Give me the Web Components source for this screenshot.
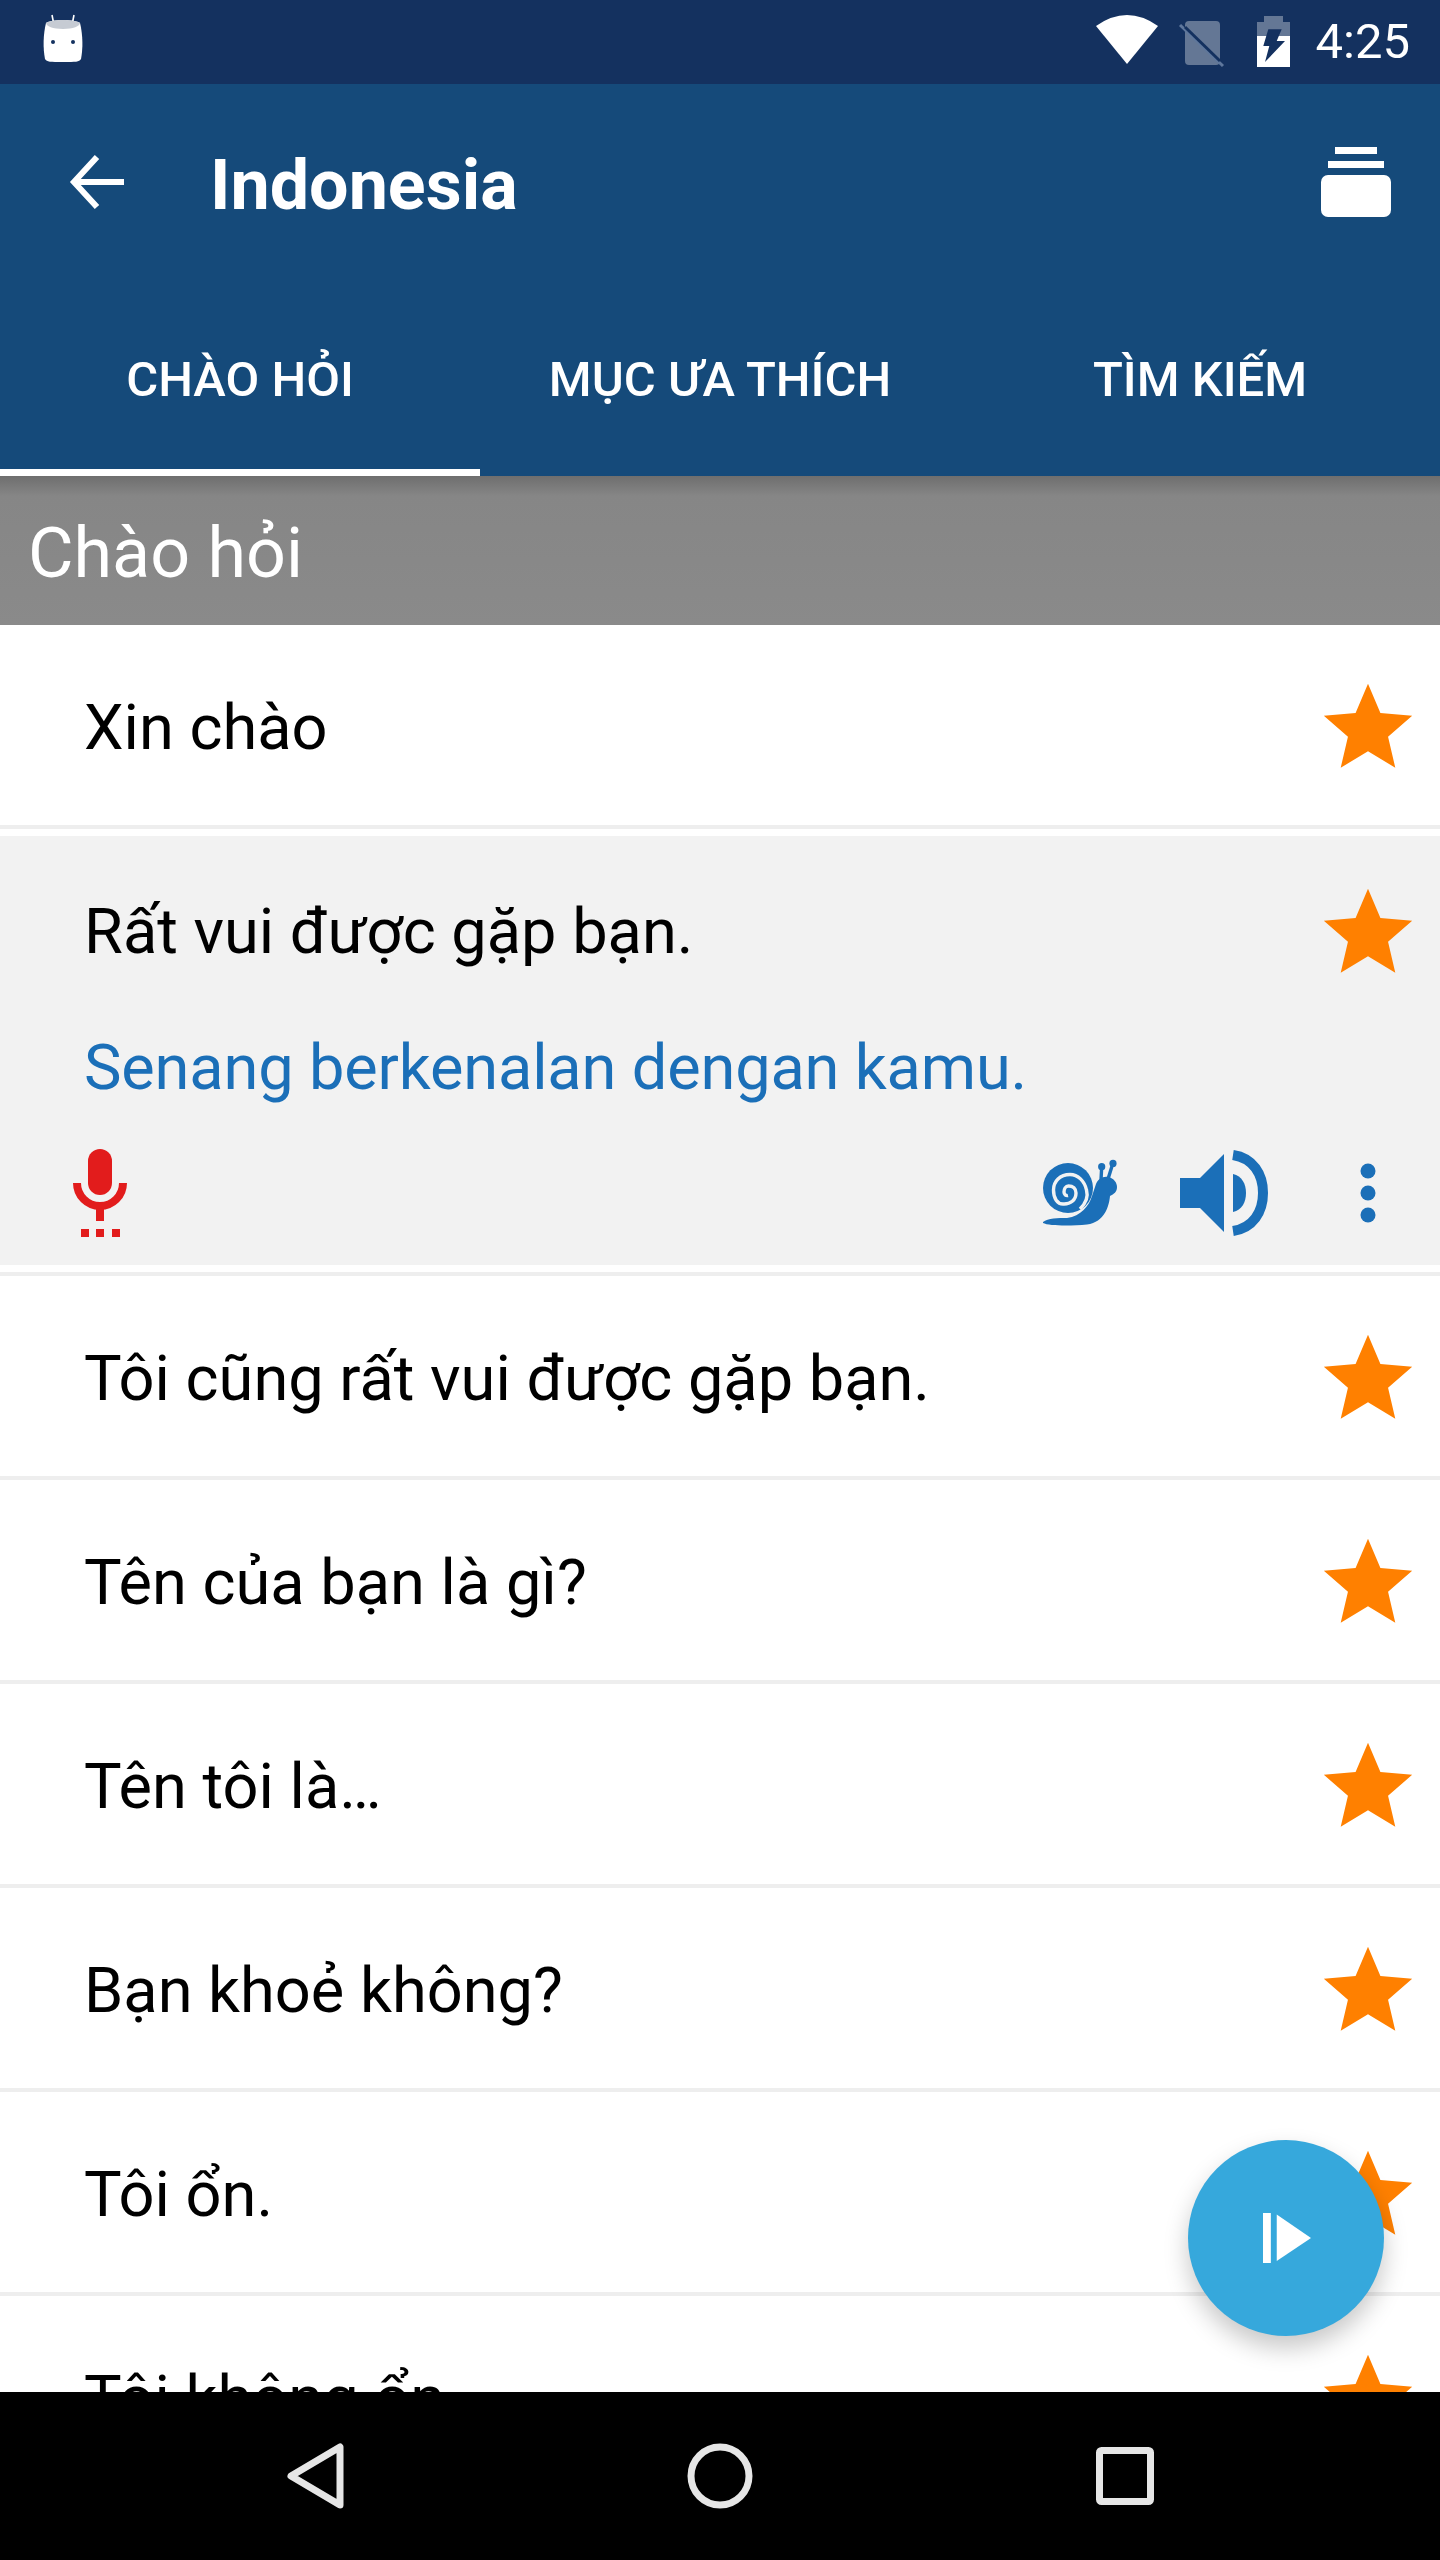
<!DOCTYPE html>
<html lang="vi">
<head>
<meta charset="utf-8">
<title>Indonesia</title>
<style>
  html, body { margin: 0; padding: 0; background: #fff; }
  body { font-family: Roboto, "Noto Sans", sans-serif; }
</style>
</head>
<body>
<app-screen>
  <status-bar slot="top"></status-bar>
  <app-header slot="top" title="Indonesia">
    <tab-item active>CHÀO HỎI</tab-item>
    <tab-item>MỤC ƯA THÍCH</tab-item>
    <tab-item>TÌM KIẾM</tab-item>
  </app-header>
  <section-head>Chào hỏi</section-head>
  <phrase-row>Xin chào</phrase-row>
  <phrase-row expanded>
    Rất vui được gặp bạn.
    <span slot="translation">Senang berkenalan dengan kamu.</span>
  </phrase-row>
  <phrase-row>Tôi cũng rất vui được gặp bạn.</phrase-row>
  <phrase-row>Tên của bạn là gì?</phrase-row>
  <phrase-row>Tên tôi là…</phrase-row>
  <phrase-row>Bạn khoẻ không?</phrase-row>
  <phrase-row>Tôi ổn.</phrase-row>
  <phrase-row>Tôi không ổn.</phrase-row>
  <fab-button slot="overlay"></fab-button>
  <nav-bar slot="bottom"></nav-bar>
</app-screen>

<script>
// all icons live here, keyed by name: [viewBox, markup]
const ICONS = {
  android: ["0 0 40 48", `
    <path d="M9 0l2 10M31 0l-2 10" stroke="#fff" stroke-width="1.6" fill="none"/>
    <path d="M3 8C8 4 32 4 37 8C40 20 40 34 38 44C36 47 33 47 20 47C7 47 4 47 2 44C0 34 0 20 3 8Z" fill="#fff"/>
    <path d="M3 8C8 4 32 4 37 8C37 11 30 14 20 14C10 14 3 11 3 8Z" fill="#c6cbd3"/>
    <circle cx="10" cy="27" r="2" fill="#14315f"/><circle cx="30" cy="27" r="2" fill="#14315f"/>`],
  wifi: ["0 0 62 49", `<path d="M0 11Q31 -11 62 11L31 49Z" fill="#fff"/>`],
  sim: ["0 0 45 48", `
    <path d="M6 5a4 4 0 0 1 4-4h27a4 4 0 0 1 4 4v36a4 4 0 0 1-4 4H10a4 4 0 0 1-4-4Z" fill="#fff" opacity=".34"/>
    <path d="M1 5L44 46" stroke="#5f779c" stroke-width="3"/>
    <path d="M6 7L41 41" stroke="#14315f" stroke-width="3"/>`],
  battery: ["0 0 33 51", `
    <path d="M7 0h19v6h7v14H0V6h7Z" fill="#fff" opacity=".34"/>
    <path d="M0 20h33v31H0Z" fill="#fff"/>
    <path d="M11.3 13.3H24.7L19.7 25H28L8 46L12.3 30H6.3Z" fill="#14315f"/>`],
  back: ["0 0 56 56", `<path d="M54 28H5M27 3L4 28l23 25" stroke="#fff" stroke-width="6" fill="none"/>`],
  layers: ["0 0 70 70", `
    <rect x="14" y="0" width="42" height="7" fill="#fff"/>
    <rect x="7" y="14" width="56" height="7" fill="#fff"/>
    <rect x="0" y="28" width="70" height="42" rx="7" fill="#fff"/>`],
  star: ["0 0 24 24", `<path d="M12 17.27L18.18 21l-1.64-7.03L22 9.24l-7.19-.61L12 2 9.19 8.63 2 9.24l5.46 4.73L5.82 21z" fill="#ff8000"/>`],
  mic: ["0 0 54 88", `
    <rect x="15" y="0" width="24" height="46" rx="12" fill="#e21c1c"/>
    <path d="M4 34a23 23 0 0 0 46 0" stroke="#e21c1c" stroke-width="8" fill="none"/>
    <rect x="23" y="56" width="8" height="16" fill="#e21c1c"/>
    <rect x="8" y="80" width="8" height="8" fill="#e21c1c"/>
    <rect x="23" y="80" width="8" height="8" fill="#e21c1c"/>
    <rect x="39" y="80" width="8" height="8" fill="#e21c1c"/>`],
  snail: ["0 0 74 66", `
    <path d="M0 62C5 58 15 58 24 58C38 56 46 46 49 36L53 24C55 19 60 16 65 17C71 18 74 23 74 27C74 32 71 34 67 36C66 46 62 62 44 64.5C28 66 6 66 0 63Z" fill="#1b6fb8"/>
    <circle cx="25" cy="28" r="25" fill="#1b6fb8"/>
    <path d="M37 49C43 43 45.5 37 43.5 30C41.5 21 35 14.5 27 14.5C17 14.5 10.5 21.5 10.5 30C10.5 38.500 14.5 44 20 44C27.5 44.5 33 40 33 33C33 28.5 30 26 25.5 26C22.5 26 21 29 21 32C21 34.5 23 36 25 35.5" stroke="#f2f2f2" stroke-width="3.4" fill="none"/>
    <path d="M58 20L58.7 7M65 19L70 3" stroke="#1b6fb8" stroke-width="3.4" fill="none"/>
    <circle cx="58.7" cy="6.7" r="3.6" fill="#1b6fb8"/><circle cx="70" cy="3.4" r="3.6" fill="#1b6fb8"/>`],
  speaker: ["0 0 88 86", `
    <path d="M0 28H20L44 4V82L20 58H0Z" fill="#1b6fb8"/>
    <path d="M53 24C62 26 66 34 66 43C66 52 62 60 53 62Z" fill="#1b6fb8"/>
    <path d="M53 5C73 8 83 24 83 43C83 62 73 78 53 81" stroke="#1b6fb8" stroke-width="10" fill="none"/>`],
  dots: ["0 0 16 60", `
    <circle cx="8" cy="8" r="7.5" fill="#1b6fb8"/><circle cx="8" cy="30" r="7.5" fill="#1b6fb8"/><circle cx="8" cy="52" r="7.5" fill="#1b6fb8"/>`],
  play: ["0 0 50 50", `
    <rect x="0" y="0" width="8" height="50" fill="#fff"/>
    <path d="M14 1.5L49 25L14 48Z" fill="#fff"/>`],
  navback: ["0 0 58 66", `<path d="M54 4V62L5 33Z" stroke="#e6e6e6" stroke-width="7" stroke-linejoin="round" fill="none"/>`],
  navhome: ["0 0 66 66", `<circle cx="33" cy="33" r="29" stroke="#e6e6e6" stroke-width="7" fill="none"/>`],
  navrecent: ["0 0 58 58", `<rect x="3.5" y="3.5" width="51" height="51" rx="2" stroke="#e6e6e6" stroke-width="7" fill="none"/>`],
};

class AppIcon extends HTMLElement {
  connectedCallback() {
    const [box, body] = ICONS[this.getAttribute("name")];
    const w = this.getAttribute("w");
    const h = this.getAttribute("h") || w;
    this.attachShadow({mode: "open"}).innerHTML = `
      <style>
        :host { display: block; flex: none; width: ${w}px; height: ${h}px; }
        svg { display: block; width: 100%; height: 100%; overflow: visible; }
      </style>
      <svg viewBox="${box}" preserveAspectRatio="none">${body}</svg>`;
  }
}
customElements.define("app-icon", AppIcon);

class AppScreen extends HTMLElement {
  constructor() {
    super();
    this.attachShadow({mode: "open"}).innerHTML = `
      <style>
        :host { display: flex; flex-direction: column; position: relative; width: 1440px; height: 2560px; overflow: hidden; }
        .list { flex: 1; min-height: 0; overflow: hidden; }
      </style>
      <slot name="top"></slot>
      <div class="list"><slot></slot></div>
      <slot name="overlay"></slot>
      <slot name="bottom"></slot>`;
  }
}
customElements.define("app-screen", AppScreen);

class StatusBar extends HTMLElement {
  constructor() {
    super();
    this.attachShadow({mode: "open"}).innerHTML = `
      <style>
        :host { display: flex; align-items: center; height: 84px; padding: 0 30px 0 43px; background: #14315f; color: #fff; }
        .right { margin-left: auto; display: flex; align-items: center; }
        .time { font-size: 49px; margin-left: 26px; line-height: 84px; }
      </style>
      <app-icon name="android" w="40" h="48" style="margin-top:-7px"></app-icon>
      <div class="right">
        <app-icon name="wifi" w="62" h="49" style="margin:-5px 21px 0 0"></app-icon>
        <app-icon name="sim" w="45" h="48" style="margin:3px 33px 0 0"></app-icon>
        <app-icon name="battery" w="33" h="51" style="margin-top:-1px"></app-icon>
        <span class="time">4:25</span>
      </div>`;
  }
}
customElements.define("status-bar", StatusBar);

class AppHeader extends HTMLElement {
  constructor() {
    super();
    this.attachShadow({mode: "open"}).innerHTML = `
      <style>
        :host { display: block; background: #154a7a; color: #fff; }
        .bar { display: flex; align-items: center; height: 196px; padding: 0 49px 0 70px; }
        h1 { margin: 0 0 0 84px; padding-top: 6px; font-size: 70px; font-weight: 700; }
        .tabs { display: grid; grid-template-columns: repeat(3, 1fr); height: 196px; }
        app-icon[name=layers] { margin-left: auto; }
      </style>
      <div class="bar">
        <app-icon name="back" w="56"></app-icon>
        <h1></h1>
        <app-icon name="layers" w="70"></app-icon>
      </div>
      <div class="tabs"><slot></slot></div>`;
    this.shadowRoot.querySelector("h1").textContent = this.getAttribute("title");
  }
}
customElements.define("app-header", AppHeader);

class TabItem extends HTMLElement {
  constructor() {
    super();
    this.attachShadow({mode: "open"}).innerHTML = `
      <style>
        :host { display: flex; align-items: center; justify-content: center; box-sizing: border-box; height: 196px; font-size: 49px; font-weight: 500; border-bottom: 7px solid transparent; padding-top: 9px; }
        :host([active]) { border-bottom-color: #fff; }
      </style>
      <slot></slot>`;
  }
}
customElements.define("tab-item", TabItem);

class SectionHead extends HTMLElement {
  constructor() {
    super();
    this.attachShadow({mode: "open"}).innerHTML = `
      <style>
        :host { display: flex; align-items: center; box-sizing: border-box; height: 149px; padding: 5px 0 0 28px; font-size: 70px; color: #fff;
          background: linear-gradient(#6e6e6e, #868686 20px, #8a8a8a); }
      </style>
      <slot></slot>`;
  }
}
customElements.define("section-head", SectionHead);

class PhraseRow extends HTMLElement {
  constructor() {
    super();
    const expanded = this.hasAttribute("expanded");
    this.attachShadow({mode: "open"}).innerHTML = `
      <style>
        :host { display: block; border-bottom: 4px solid #eee; font-size: 63.1px; color: #000; background: #fff; }
        :host([expanded]) { padding: 7px 0; }
        :host([expanded]) .panel { background: #f2f2f2; }
        :host([expanded]) .head { height: 190px; }
        :host([expanded]) .head span { padding-top: 0; }
        :host([expanded]) .head app-icon { margin-top: 3px; }
        .head { display: flex; align-items: center; height: 200px; padding: 0 19px 0 84px; }
        .head span { flex: 1; padding-top: 3px; }
        .head app-icon { margin-top: 6px; }
        .translation { padding-left: 84px; height: 90px; line-height: 82px; letter-spacing: -0.15px; color: #1b6fb8; }
        .actions { display: flex; align-items: center; box-sizing: border-box; height: 149px; padding: 5px 64px 0 73px; }
        .spacer { flex: 1; }
      </style>
      <div class="panel">
        <div class="head"><span><slot></slot></span><app-icon name="star" w="106"></app-icon></div>
        ${expanded ? `
        <div class="translation"><slot name="translation"></slot></div>
        <div class="actions">
          <app-icon name="mic" w="54" h="88"></app-icon>
          <div class="spacer"></div>
          <app-icon name="snail" w="74" h="66" style="margin-right:63px"></app-icon>
          <app-icon name="speaker" w="88" h="86" style="margin-right:92px"></app-icon>
          <app-icon name="dots" w="16" h="60"></app-icon>
        </div>` : ""}
      </div>`;
  }
}
customElements.define("phrase-row", PhraseRow);

class FabButton extends HTMLElement {
  constructor() {
    super();
    this.attachShadow({mode: "open"}).innerHTML = `
      <style>
        :host { position: absolute; left: 1188px; top: 2140px; width: 196px; height: 196px; border-radius: 50%; background: #36a8dc;
          box-shadow: 0 12px 24px rgba(0,0,0,.22); display: flex; align-items: center; justify-content: center; }
        app-icon { margin-left: 2px; }
      </style>
      <app-icon name="play" w="49" h="50"></app-icon>`;
  }
}
customElements.define("fab-button", FabButton);

class NavBar extends HTMLElement {
  constructor() {
    super();
    this.attachShadow({mode: "open"}).innerHTML = `
      <style>
        :host { display: grid; grid-template-columns: repeat(3, 1fr); flex: none; height: 168px; background: #000; padding: 0 112px; }
        div { display: flex; align-items: center; justify-content: center; }
      </style>
      <div><app-icon name="navback" w="58" h="66"></app-icon></div>
      <div><app-icon name="navhome" w="66"></app-icon></div>
      <div><app-icon name="navrecent" w="58"></app-icon></div>`;
  }
}
customElements.define("nav-bar", NavBar);
</script>
</body>
</html>
